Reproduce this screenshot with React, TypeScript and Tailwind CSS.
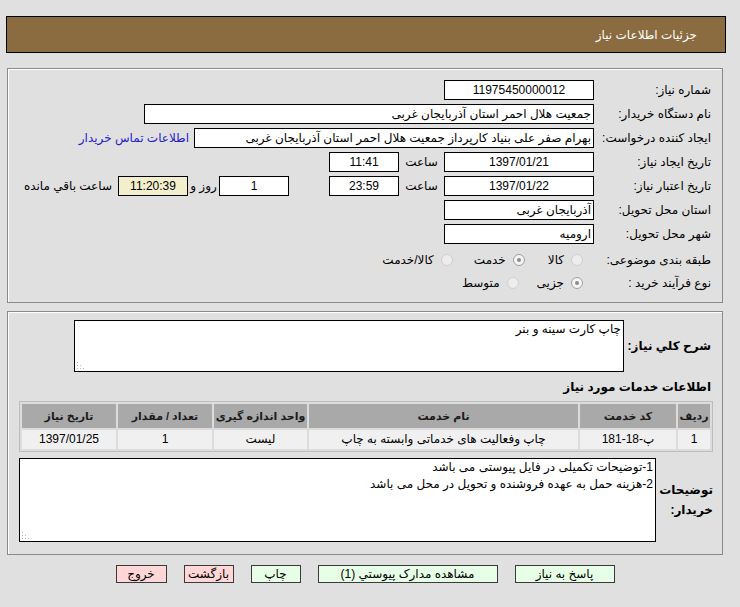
import React from 'react';

const Radio: React.FC<{ checked?: boolean; label: string; className?: string }> = ({ checked, label, className }) => (
  <div className={`flex items-center ${className ?? ''}`}>
    <span
      className={`flex h-[12px] w-[12px] items-center justify-center rounded-full border ${
        checked ? 'border-[#a0a0a0] bg-[#f4f4f4]' : 'border-[#cfcfcf] bg-[#ededed]'
      }`}
    >
      {checked && <span className="h-[4px] w-[4px] rounded-full bg-[#8c8c8c]" />}
    </span>
    <span className="mr-[7px]">{label}</span>
  </div>
);

const Box: React.FC<{ className?: string; bg?: string; children?: React.ReactNode }> = ({ className, bg, children }) => (
  <div
    className={`flex h-[20px] items-center overflow-hidden whitespace-nowrap border border-black px-[2px] leading-none ${bg ?? 'bg-white'} ${className ?? ''}`}
  >
    {children}
  </div>
);

const Row: React.FC<{ label: string; children: React.ReactNode; className?: string }> = ({ label, children, className }) => (
  <div className={`flex h-[20px] items-center whitespace-nowrap ${className ?? ''}`}>
    <div className="w-[117px] shrink-0">{label}</div>
    {children}
  </div>
);

// dotted resize grip like the old IE textarea
const Grip = () => (
  <svg className="pointer-events-none absolute bottom-[3px] left-[3px]" width="8" height="8" viewBox="0 0 8 8">
    <rect x="0" y="1" width="1" height="1" fill="#b8b8b8" />
    <rect x="0" y="4" width="1" height="1" fill="#b8b8b8" />
    <rect x="0" y="7" width="1" height="1" fill="#b8b8b8" />
    <rect x="3" y="4" width="1" height="1" fill="#b8b8b8" />
    <rect x="3" y="7" width="1" height="1" fill="#b8b8b8" />
    <rect x="6" y="7" width="1" height="1" fill="#b8b8b8" />
  </svg>
);

const services = [
  { id: '1', code: 'پ-18-181', name: 'چاپ وفعالیت های خدماتی وابسته به چاپ', unit: 'لیست', qty: '1', date: '1397/01/25' },
];

export default function App() {
  return (
    <div
      dir="rtl"
      className="min-h-[607px] w-[740px] bg-[#e0e0e0] pt-[16px] text-[12px] text-black font-['Liberation_Sans','DejaVu_Sans',sans-serif]"
    >
      {/* header */}
      <div className="mr-[14px] flex h-[37px] w-[720px] items-center border border-black bg-[#8b6b40] pr-[28px] text-white">
        جزئیات اطلاعات نیاز
      </div>

      {/* main info */}
      <div className="mr-[17px] mt-[15px] w-[716px] border border-[#8a8a8a] pb-[9px] pr-[11px] pt-[11px] shadow-[inset_1px_1px_0_#ffffff]">
        <div className="flex flex-col gap-[4px]">
          <Row label="شماره نیاز:">
            <Box className="w-[150px] justify-center">11975450000012</Box>
          </Row>
          <Row label="نام دستگاه خریدار:">
            <Box className="w-[450px]">جمعیت هلال احمر استان آذربایجان غربی</Box>
          </Row>
          <Row label="ایجاد کننده درخواست:">
            <Box className="w-[400px]">بهرام صفر علی بنیاد کارپرداز جمعیت هلال احمر استان آذربایجان غربی</Box>
            <a className="mr-[5px] text-[#2323c8]">اطلاعات تماس خریدار</a>
          </Row>
          <Row label="تاریخ ایجاد نیاز:">
            <Box className="w-[150px] justify-center">1397/01/21</Box>
            <span className="w-[45px] text-center">ساعت</span>
            <Box className="w-[70px] justify-center">11:41</Box>
          </Row>
          <Row label="تاریخ اعتبار نیاز:">
            <Box className="w-[150px] justify-center">1397/01/22</Box>
            <span className="w-[45px] text-center">ساعت</span>
            <Box className="w-[70px] justify-center">23:59</Box>
            <Box className="mr-[40px] w-[70px] justify-center">1</Box>
            <span className="w-[31px] text-center">روز و</span>
            <Box className="w-[70px] justify-center" bg="bg-[#f3efcd]">11:20:39</Box>
            <span className="mr-[6px]">ساعت باقي مانده</span>
          </Row>
          <Row label="استان محل تحویل:">
            <Box className="w-[150px]">آذربایجان غربی</Box>
          </Row>
          <Row label="شهر محل تحویل:">
            <Box className="w-[150px]">ارومیه</Box>
          </Row>
        </div>
        <Row label="طبقه بندی موضوعی:" className="mt-[6px]">
          <Radio label="کالا" className="mr-[11px]" />
          <Radio label="خدمت" checked className="mr-[23px]" />
          <Radio label="کالا/خدمت" className="mr-[21px]" />
        </Row>
        <Row label="نوع فرآیند خرید :" className="mt-[3px]">
          <Radio label="جزیی" checked className="mr-[11px]" />
          <Radio label="متوسط" className="mr-[18px]" />
        </Row>
      </div>

      {/* description + services */}
      <div className="mr-[17px] mt-[8px] w-[716px] border border-[#8a8a8a] pb-[12px] pl-[11px] pr-[9px] pt-[8px] shadow-[inset_1px_1px_0_#ffffff]">
        <div className="flex items-center">
          <div className="w-[89px] shrink-0 whitespace-nowrap pr-[2px] text-[12px] font-bold">شرح کلي نیاز:</div>
          <div className="relative flex">
            <textarea
              readOnly
              defaultValue="چاپ کارت سینه و بنر"
              className="h-[52px] w-[550px] resize-none border border-black bg-white px-[2px] text-[12px] leading-[16px] outline-none"
            />
            <Grip />
          </div>
        </div>

        <div className="mt-[6px] pr-[2px] text-[12px] font-bold">اطلاعات خدمات مورد نیاز</div>

        <table className="mt-[5px] w-[694px] table-fixed border-separate border-spacing-[2px] border border-[#bdbdbd] bg-[#dcdcdc] text-center">
          <thead>
            <tr className="h-[24px] whitespace-nowrap bg-[#a9a9a9] text-[11px] font-bold text-[#1c1c1c]">
              <th className="w-[32px]">ردیف</th>
              <th className="w-[96px]">کد خدمت</th>
              <th className="w-[269px]">نام خدمت</th>
              <th className="w-[93px]">واحد اندازه گیری</th>
              <th className="w-[94px]">تعداد / مقدار</th>
              <th>تاریخ نیاز</th>
            </tr>
          </thead>
          <tbody>
            {services.map((s) => (
              <tr key={s.id} className="h-[19px] whitespace-nowrap bg-[#f0f0f0] leading-[19px]">
                <td>{s.id}</td>
                <td>{s.code}</td>
                <td>{s.name}</td>
                <td>{s.unit}</td>
                <td>{s.qty}</td>
                <td>{s.date}</td>
              </tr>
            ))}
          </tbody>
        </table>

        <div className="mt-[6px] flex items-center">
          <div className="w-[57px] shrink-0 text-[12px] font-bold leading-[20px]">توضیحات خریدار:</div>
          <div className="relative flex">
            <textarea
              readOnly
              defaultValue={'1-توضیحات تکمیلی در فایل پیوستی می باشد\n2-هزینه حمل به عهده فروشنده و تحویل در محل می باشد'}
              className="h-[84px] w-[637px] resize-none border border-black bg-white px-[2px] text-[12px] leading-[17px] outline-none"
            />
            <Grip />
          </div>
        </div>
      </div>

      {/* actions */}
      <div className="mr-[17px] mt-[10px] flex w-[716px] justify-center gap-[17px] text-[12px]">
        <button className="h-[18px] w-[100px] border border-[#3a3a3a] bg-[#e6ffe6] leading-none">پاسخ به نیاز</button>
        <button className="h-[18px] w-[180px] border border-[#3a3a3a] bg-[#e6ffe6] leading-none">مشاهده مدارک پیوستي (1)</button>
        <button className="h-[18px] w-[50px] border border-[#3a3a3a] bg-[#e6ffe6] leading-none">چاپ</button>
        <button className="h-[18px] w-[50px] border border-[#3a3a3a] bg-[#ffd7d7] leading-none">بازگشت</button>
        <button className="h-[18px] w-[51px] border border-[#3a3a3a] bg-[#ffd7d7] leading-none">خروج</button>
      </div>
    </div>
  );
}
